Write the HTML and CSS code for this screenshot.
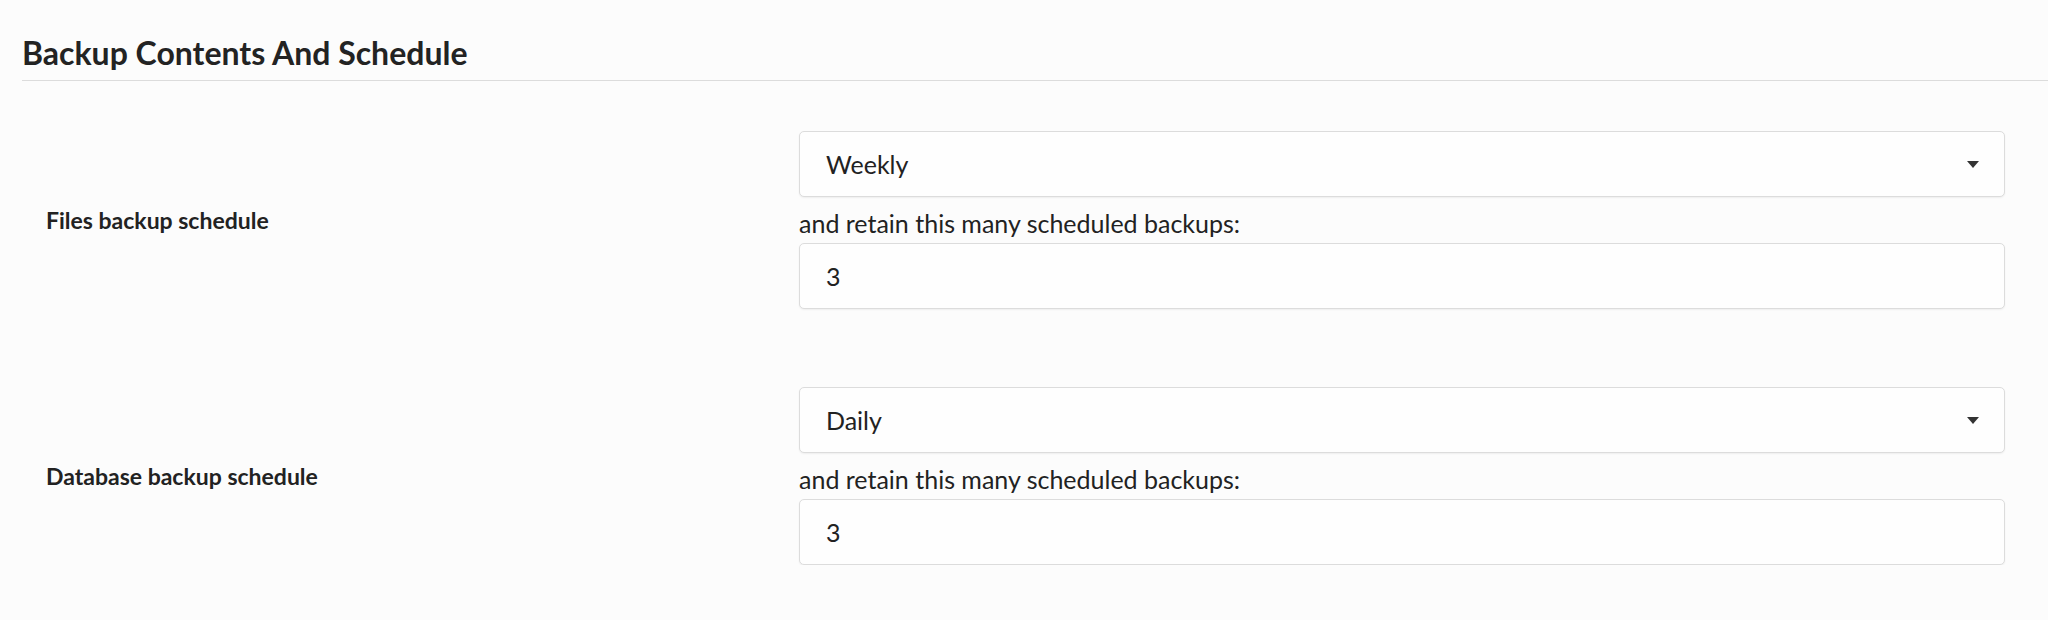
FILE: index.html
```html
<!DOCTYPE html>
<html>
<head>
<meta charset="utf-8">
<link rel="stylesheet" href="styles.css">
</head>
<body>
<div class="page">
  <h2 class="section-title">Backup Contents And Schedule</h2>
  <div class="rows">
    <div class="row">
      <div class="row-label">Files backup schedule</div>
      <div class="row-field">
        <div class="select"><span>Weekly</span><span class="caret"></span></div>
        <div class="hint">and retain this many scheduled backups:</div>
        <div class="input">3</div>
      </div>
    </div>
    <div class="row">
      <div class="row-label">Database backup schedule</div>
      <div class="row-field">
        <div class="select"><span>Daily</span><span class="caret"></span></div>
        <div class="hint">and retain this many scheduled backups:</div>
        <div class="input">3</div>
      </div>
    </div>
  </div>
</div>
</body>
</html>
```
FILE: styles.css
```css
html, body {
  margin: 0;
  padding: 0;
  background: #fcfcfc;
  font-family: Lato, "Open Sans", sans-serif;
  color: #222;
}
.page {
  padding: 0 0 0 22px;
}
.section-title {
  margin: 0;
  padding-top: 36px;
  padding-bottom: 11px;
  font-size: 32px;
  line-height: 33px;
  font-weight: 700;
  color: #232323;
  border-bottom: 1px solid #dcdcdc;
}
.rows {
  display: flex;
  flex-direction: column;
  gap: 78px;
  padding-top: 50px;
}
.row {
  display: grid;
  grid-template-columns: 753px 1206px;
  align-items: center;
  padding-left: 24px;
}
.row-label {
  font-size: 23px;
  font-weight: 700;
  color: #222;
}
.row-field {
  display: flex;
  flex-direction: column;
}
.select, .input {
  box-sizing: border-box;
  height: 66px;
  border: 1px solid #dcdcdc;
  border-radius: 5px;
  background: #fefefe;
  box-shadow: 0 1px 2px rgba(0,0,0,0.06);
  display: flex;
  align-items: center;
  padding: 0 26px;
  font-size: 25px;
  color: #222;
}
.select {
  justify-content: space-between;
  padding-right: 25px;
}
.caret {
  width: 0;
  height: 0;
  border-left: 6px solid transparent;
  border-right: 6px solid transparent;
  border-top: 7px solid #333;
}
.hint {
  font-size: 25px;
  line-height: 30px;
  margin: 11px 0 5px;
  color: #222;
}
```
